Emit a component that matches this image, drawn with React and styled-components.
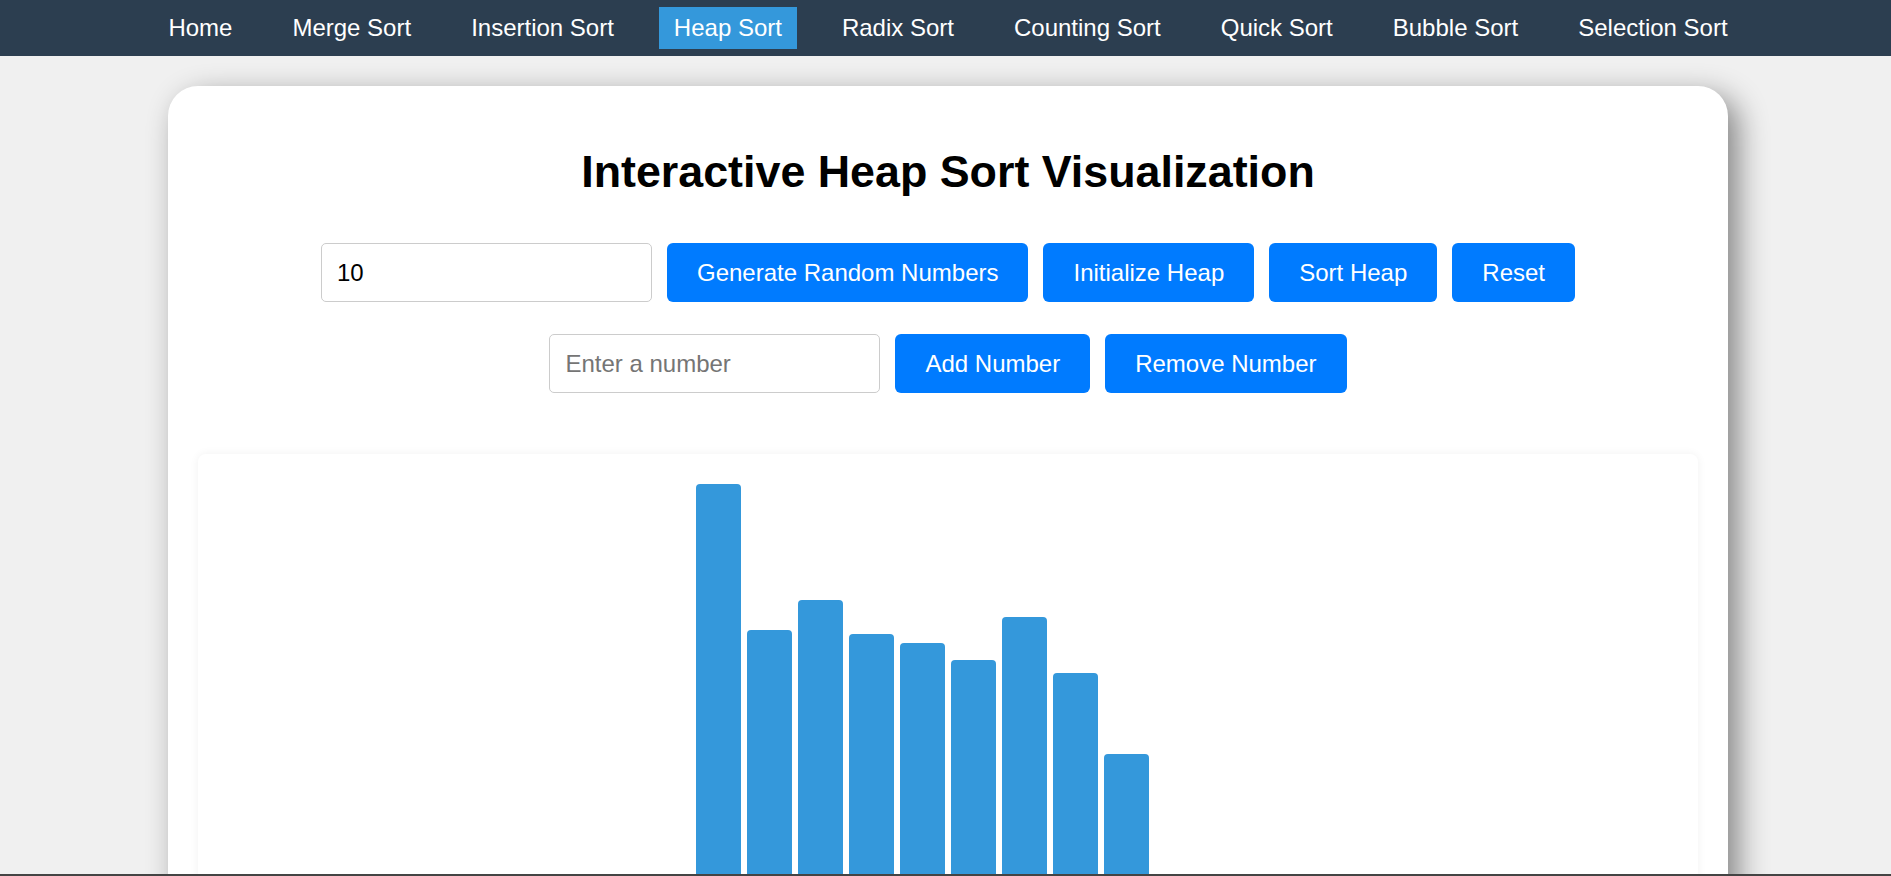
import styled, { createGlobalStyle } from 'styled-components';

const GlobalStyle = createGlobalStyle`
    body {
        margin: 0;
        background: #f0f0f0;
        font-family: "Liberation Sans", Arial, sans-serif;
    }
`;

const Nav = styled.nav`
    background: #2c3e50;
    padding: 7px 0 7px 5px;
`;

const NavList = styled.ul`
    display: flex;
    justify-content: center;
    gap: 30px;
    list-style: none;
    margin: 0;
    padding: 0;
`;

const NavLink = styled.a`
    display: block;
    padding: 7px 15px;
    font-size: 24px;
    color: #fff;
    text-decoration: none;
    background: ${props => props.active ? '#3498db' : 'transparent'};
`;

const Main = styled.main`
    padding-left: 5px;
`;

const Card = styled.div`
    width: 1560px;
    box-sizing: border-box;
    margin: 30px auto 0;
    padding: 30px;
    background: #fff;
    border-radius: 30px;
    box-shadow: 10px 10px 30px rgba(0, 0, 0, 0.45);
    display: flex;
    flex-direction: column;
`;

const Title = styled.h1`
    margin: 30px 0;
    text-align: center;
    font-size: 44.8px;
    font-weight: bold;
    color: #000;
`;

const Controls = styled.div`
    display: flex;
    justify-content: center;
    gap: 15px;
    margin: 16px 0;
`;

const NumberInput = styled.input`
    width: 331px;
    height: 59px;
    box-sizing: border-box;
    padding: 0 15px;
    border: 1px solid #ccc;
    border-radius: 5px;
    font-family: inherit;
    font-size: 24px;
    color: #000;

    &::placeholder {
        color: #757575;
    }
`;

const Button = styled.button`
    height: 59px;
    padding: 0 30px;
    border: none;
    border-radius: 6px;
    background: #007bff;
    color: #fff;
    font-family: inherit;
    font-size: 24px;
    cursor: pointer;
`;

const Chart = styled.div`
    margin-top: 45px;
    padding: 30px 20px;
    height: 450px;
    background: #fff;
    border-radius: 8px;
    box-shadow: 0 0 10px rgba(0, 0, 0, 0.06);
    display: flex;
    justify-content: center;
    align-items: flex-end;
    gap: 6px;
`;

const Bar = styled.div`
    width: 45px;
    background: #3498db;
    border-radius: 4px 4px 0 0;
`;

const Footer = styled.footer`
    position: fixed;
    left: 0;
    right: 0;
    bottom: 0;
    height: 2px;
    background: #444;
`;

const links = ['Home', 'Merge Sort', 'Insertion Sort', 'Heap Sort', 'Radix Sort', 'Counting Sort', 'Quick Sort', 'Bubble Sort', 'Selection Sort'];

// bar heights in px, chart is 450 tall
const heights = [450, 304, 334, 300, 291, 274, 317, 261, 180, 40];

export default function App() {
    return (
        <>
            <GlobalStyle />
            <Nav>
                <NavList>
                    {links.map(link => (
                        <li key={link}>
                            <NavLink active={link === 'Heap Sort'}>{link}</NavLink>
                        </li>
                    ))}
                </NavList>
            </Nav>
            <Main>
                <Card>
                    <Title>Interactive Heap Sort Visualization</Title>
                    <Controls>
                        <NumberInput type="number" defaultValue="10" />
                        <Button>Generate Random Numbers</Button>
                        <Button>Initialize Heap</Button>
                        <Button>Sort Heap</Button>
                        <Button>Reset</Button>
                    </Controls>
                    <Controls>
                        <NumberInput type="number" placeholder="Enter a number" />
                        <Button>Add Number</Button>
                        <Button>Remove Number</Button>
                    </Controls>
                    <Chart>
                        {heights.map((h, i) => (
                            <Bar key={i} style={{ height: h }} />
                        ))}
                    </Chart>
                </Card>
            </Main>
            <Footer />
        </>
    );
}
